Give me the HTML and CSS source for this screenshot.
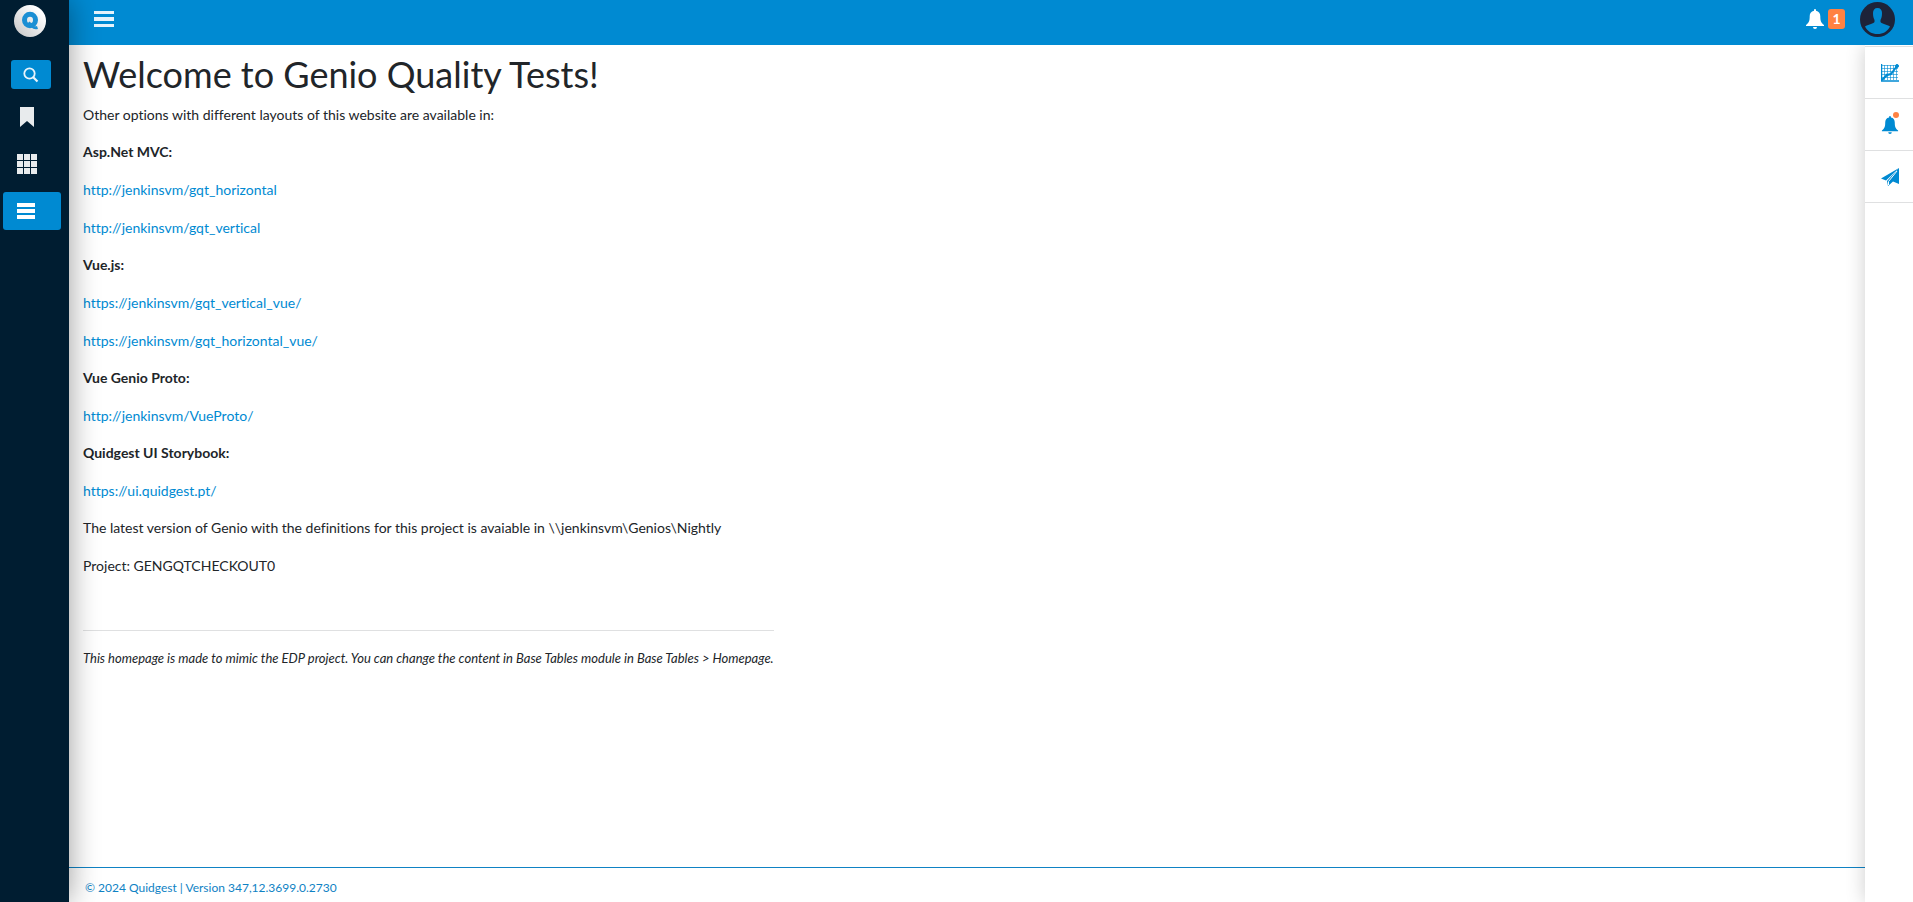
FILE: index.html
```html
<!DOCTYPE html>
<html lang="en">
<head>
    <meta charset="UTF-8">
    <meta name="viewport" content="width=device-width, initial-scale=1.0">
    <title>Genio Quality Tests</title>
    <link rel="stylesheet" href="styles.css">
</head>
<body>
    <aside class="sidebar">
        <a class="logo" href="#" aria-label="Home">
            <svg width="32" height="32" viewBox="0 0 32 32">
                <defs>
                    <linearGradient id="logoFill" x1="1" y1="0" x2="0" y2="1">
                        <stop offset="0.2" stop-color="#ffffff"/>
                        <stop offset="1" stop-color="#c4c4c4"/>
                    </linearGradient>
                </defs>
                <circle cx="16" cy="16" r="16" fill="url(#logoFill)"/>
                <ellipse cx="16" cy="15" rx="5.5" ry="5.8" fill="none" stroke="#1b8fd4" stroke-width="5"/>
                <path d="M14.500 17.500l4 4q2 2 5 1" fill="none" stroke="#1b8fd4" stroke-width="3"/>
            </svg>
        </a>
        <button class="search-btn" type="button" aria-label="Search">
            <svg width="16" height="16" viewBox="0 0 16 16" fill="none" stroke="#e9f4fb">
                <circle cx="6.5" cy="6.5" r="5.2" stroke-width="1.8"/>
                <path d="M10 10l4.5 4.5" stroke-width="2.2"/>
            </svg>
        </button>
        <nav class="side-nav">
            <button class="side-item" type="button" aria-label="Bookmarks">
                <svg width="20" height="20" viewBox="0 0 20 20" fill="#e8ebed"><path d="M3 0h14v20l-7-6-7 6z"/></svg>
            </button>
            <button class="side-item" type="button" aria-label="Modules">
                <svg width="20" height="20" viewBox="0 0 20 20" fill="#e8ebed">
                    <path d="M0 0h6v6H0zM7 0h6v6H7zM14 0h6v6h-6zM0 7h6v6H0zM7 7h6v6H7zM14 7h6v6h-6zM0 14h6v6H0zM7 14h6v6H7zM14 14h6v6h-6z"/>
                </svg>
            </button>
            <button class="side-item active" type="button" aria-label="Menu">
                <svg width="18" height="16" viewBox="0 0 18 16" fill="#fff"><path d="M0 0h18v4H0zM0 6h18v4H0zM0 12h18v4H0z"/></svg>
            </button>
        </nav>
    </aside>

    <div class="page">
        <header class="topbar">
            <button class="icon-btn" type="button" aria-label="Toggle menu">
                <svg width="20" height="16" viewBox="0 0 20 16" fill="#e6f3fb"><path d="M0 0h20v3H0zM0 6h20v4H0zM0 13h20v3H0z"/></svg>
            </button>
            <div class="user-tools">
                <button class="icon-btn alerts" type="button" aria-label="Notifications">
                    <svg width="18" height="20" viewBox="0 0 18 20" fill="#fff">
                        <path d="M8 1a1 1 0 0 1 2 0v.8c3 .5 4.300 2.700 4.300 5.400 0 4.500.700 6.500 3.700 8.800v1H0v-1c3-2.300 3.700-4.300 3.700-8.800C3.700 4.500 5 2.300 8 1.800zM7 18h4a2 2 0 0 1-4 0z"/>
                    </svg>
                    <span class="badge">1</span>
                </button>
                <button class="avatar" type="button" aria-label="User">
                    <svg width="35" height="35" viewBox="0 0 35 35">
                        <circle cx="17.500" cy="17.500" r="17.500" fill="#1d2339"/>
                        <path d="M17.500 6c-3 0-4.500 2-4.500 5 0 3.500.5 5 1.500 7v2c-1.500 2-6.500 2.500-9.500 4.500C7.500 29.500 12 32 17.500 32S27.500 29.500 30 24.500c-3-2-8-2.500-9.500-4.500v-2c1-2 1.500-3.500 1.500-7 0-3-1.500-5-4.500-5z" fill="#008ad2"/>
                    </svg>
                </button>
            </div>
        </header>

        <div class="body">
            <div class="main">
                <main class="content">
                    <h1>Welcome to Genio Quality Tests!</h1>
                    <p>Other options with different layouts of this website are available in:</p>
                    <section>
                        <p><strong>Asp.Net MVC:</strong></p>
                        <p><a href="#">http://jenkinsvm/gqt_horizontal</a></p>
                        <p><a href="#">http://jenkinsvm/gqt_vertical</a></p>
                    </section>
                    <section>
                        <p><strong>Vue.js:</strong></p>
                        <p><a href="#">https://jenkinsvm/gqt_vertical_vue/</a></p>
                        <p><a href="#">https://jenkinsvm/gqt_horizontal_vue/</a></p>
                    </section>
                    <section>
                        <p><strong>Vue Genio Proto:</strong></p>
                        <p><a href="#">http://jenkinsvm/VueProto/</a></p>
                    </section>
                    <section>
                        <p><strong>Quidgest UI Storybook:</strong></p>
                        <p><a href="#">https://ui.quidgest.pt/</a></p>
                    </section>
                    <section>
                        <p>The latest version of Genio with the definitions for this project is avaiable in \\jenkinsvm\Genios\Nightly</p>
                        <p>Project: GENGQTCHECKOUT0</p>
                    </section>
                    <p class="note"><em>This homepage is made to mimic the EDP project. You can change the content in Base Tables module in Base Tables &gt; Homepage.</em></p>
                </main>
                <footer class="footer">© 2024 Quidgest | Version 347,12.3699.0.2730</footer>
            </div>
            <aside class="right-bar">
                <button class="right-item" type="button" aria-label="Charts">
                    <svg width="18" height="18" viewBox="0 0 18 18" fill="none" stroke="#008ad2">
                        <path d="M.5 0v17.500M0 17h18" stroke-width="1.500"/>
                        <path d="M3.500 1v15M6.500 1v15M9.500 1v15M12.500 1v15M15.500 1v15M1 1.500h16M1 4.500h16M1 7.500h16M1 10.500h16M1 13.500h16" stroke-width="1" stroke-opacity="0.6"/>
                        <path d="M1 16l5-5 4-1 6-8" stroke-width="2"/>
                        <circle cx="16" cy="2" r="1.500" fill="#008ad2"/>
                        <circle cx="6" cy="11" r="1" fill="#008ad2"/>
                    </svg>
                </button>
                <button class="right-item" type="button" aria-label="Alerts">
                    <svg width="18" height="18" viewBox="0 0 18 20" fill="#008ad2">
                        <path d="M8 1a1 1 0 0 1 2 0v.8c3 .5 4.300 2.700 4.300 5.400 0 4.500.700 6.500 3.700 8.800v1H0v-1c3-2.300 3.700-4.300 3.700-8.800C3.700 4.500 5 2.300 8 1.800zM7 18h4a2 2 0 0 1-4 0z"/>
                    </svg>
                    <span class="dot"></span>
                </button>
                <button class="right-item" type="button" aria-label="Suggestions">
                    <svg width="18" height="18" viewBox="0 0 18 18" fill="#008ad2">
                        <path d="M0 10.500L18 0 5 12.500zM18 0v16l-6-2.500-5 4.500-1-5z"/>
                        <path d="M16 3L7.500 13.500V17" fill="none" stroke="#fff" stroke-width="1"/>
                    </svg>
                </button>
            </aside>
        </div>
    </div>
</body>
</html>
```

FILE: styles.css
```css
* {
    box-sizing: border-box;
}

body {
    display: flex;
    min-height: 100vh;
    margin: 0;
    background-color: #fff;
    color: #212529;
    font-family: Lato, sans-serif;
    font-size: 14px;
    font-variant-ligatures: none;
    line-height: 22px;
}

button {
    border: none;
    padding: 0;
    background: none;
    color: inherit;
    font: inherit;
    cursor: pointer;
}

svg {
    display: block;
}

a {
    color: #008ad2;
    text-decoration: none;
}

a:hover {
    text-decoration: underline;
}

/* Left sidebar */
.sidebar {
    position: relative;
    z-index: 3;
    flex: none;
    width: 69px;
    padding: 5px 3px;
    background-color: #001d31;
    box-shadow: 0 0 30px rgba(0, 0, 0, 0.4);
}

.logo {
    display: block;
    margin-left: 11px;
}

.search-btn {
    display: flex;
    align-items: center;
    justify-content: center;
    width: 40px;
    height: 29px;
    margin: 23px 0 0 8px;
    border-radius: 3px;
    background-color: #008ad2;
}

.side-nav {
    display: flex;
    flex-direction: column;
    gap: 9px;
    margin-top: 9px;
}

.side-item {
    display: flex;
    align-items: center;
    width: 58px;
    height: 38px;
    padding-left: 14px;
    border-radius: 3px;
}

.side-item.active {
    background-color: #008ad2;
}

/* Page frame */
.page {
    display: flex;
    flex: 1;
    flex-direction: column;
}

.topbar {
    position: relative;
    z-index: 2;
    display: flex;
    align-items: flex-start;
    justify-content: space-between;
    height: 45px;
    padding: 2px 18px 0 25px;
    background-color: #008ad2;
}

.icon-btn {
    display: flex;
    align-items: center;
    height: 34px;
}

.user-tools {
    display: flex;
    gap: 15px;
}

.alerts {
    gap: 4px;
}

.badge {
    width: 17px;
    height: 20px;
    border-radius: 3px;
    background-color: #ff8242;
    color: #fff;
    font-weight: bold;
    line-height: 19px;
    text-align: center;
}

.body {
    display: flex;
    flex: 1;
}

.main {
    display: flex;
    flex: 1;
    flex-direction: column;
}

/* Home content */
.content {
    flex: 1;
    align-self: flex-start;
    padding: 8px 14px;
}

h1 {
    margin: 0 0 8px;
    font-size: 36px;
    font-weight: 400;
    line-height: 43px;
}

p {
    margin: 0 0 16px;
}

section {
    margin-top: -1px;
}

.note {
    margin-top: 53px;
    padding-top: 16px;
    border-top: 1px solid #dfe0e1;
    font-size: 13px;
}

.footer {
    padding: 9px 16px 3px;
    border-top: 1px solid #0f82c4;
    color: #0f82c4;
    font-size: 12px;
}

/* Right bar */
.right-bar {
    position: relative;
    z-index: 1;
    width: 48px;
    padding-top: 1px;
    background-color: #fff;
    box-shadow: 0 0 20px rgba(0, 0, 0, 0.2);
}

.right-item {
    position: relative;
    display: flex;
    align-items: center;
    justify-content: center;
    width: 100%;
    height: 52px;
    padding-left: 2px;
    border-top: 1px solid #dfe0e1;
}

.right-item:last-child {
    height: 53px;
    border-bottom: 1px solid #dfe0e1;
}

.dot {
    position: absolute;
    top: 13px;
    right: 14px;
    width: 6px;
    height: 6px;
    border-radius: 50%;
    background-color: #ff8242;
}
```
